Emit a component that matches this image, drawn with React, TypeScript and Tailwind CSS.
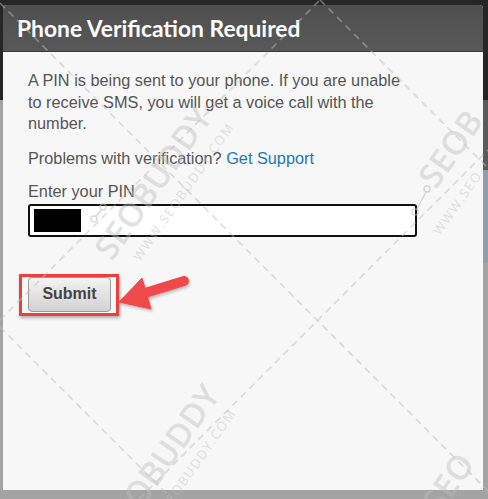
import React from "react";

const Watermark = () => (
  <svg
    className="pointer-events-none absolute inset-0"
    width="488"
    height="499"
    viewBox="0 0 488 499"
  >
    <g stroke="rgba(190,190,190,0.5)" strokeWidth="1.6" strokeDasharray="7 5" fill="none">
      <line x1="0" y1="3" x2="488" y2="491" />
      <line x1="0" y1="327" x2="172" y2="499" />
      <line x1="320" y1="0" x2="488" y2="168" />
      <line x1="0" y1="320" x2="320" y2="0" />
      <line x1="139" y1="499" x2="488" y2="150" />
    </g>
    <g fill="rgba(190,190,190,0.45)" fontFamily="'Open Sans', sans-serif">
      <text x="112" y="262" fontSize="33" fontWeight="600" transform="rotate(-55 112 262)">SEOBUDDY</text>
      <text x="140" y="262" fontSize="13" letterSpacing="1.5" transform="rotate(-55 140 262)">WWW.SEOBUDDY.COM</text>
      <text x="120" y="540" fontSize="33" fontWeight="600" transform="rotate(-55 120 540)">SEOBUDDY</text>
      <text x="142" y="548" fontSize="13" letterSpacing="1.5" transform="rotate(-55 142 548)">WWW.SEOBUDDY.COM</text>
      <text x="436" y="190" fontSize="33" fontWeight="600" transform="rotate(-55 436 190)">SEOB</text>
      <text x="440" y="236" fontSize="13" letterSpacing="1.5" transform="rotate(-55 440 236)">WWW.SEO</text>
      <text x="440" y="515" fontSize="33" fontWeight="600" transform="rotate(-55 440 515)">SEO</text>
    </g>
    <g stroke="rgba(190,190,190,0.55)" strokeWidth="1.5" fill="none">
      <circle cx="103" cy="207" r="3" />
      <circle cx="94" cy="219" r="3" />
      <line x1="101" y1="210" x2="96" y2="216" />
      <circle cx="427" cy="189" r="3" />
      <circle cx="415" cy="212" r="3" />
      <line x1="426" y1="192" x2="417" y2="209" />
    </g>
  </svg>
);

const Arrow = () => (
  <svg
    className="pointer-events-none absolute left-[110px] top-[265px]"
    width="90"
    height="55"
    viewBox="110 265 90 55"
  >
    <defs>
      <filter id="sh" x="-20%" y="-20%" width="140%" height="140%">
        <feDropShadow dx="1" dy="2" stdDeviation="1.5" floodColor="#000" floodOpacity="0.25" />
      </filter>
    </defs>
    <g filter="url(#sh)" fill="#f04848" stroke="#f04848">
      <line x1="145" y1="293" x2="184" y2="281" strokeWidth="10" strokeLinecap="round" />
      <polygon points="119,302 142,278 151,309" strokeWidth="1" strokeLinejoin="round" />
    </g>
  </svg>
);

export default function App() {
  return (
    <div className="relative h-[499px] w-[488px] overflow-hidden bg-[#a3a3a3]">
      {/* dimmed page behind */}
      <div className="flex h-full flex-col">
        <div className="h-[100px] bg-[#262626]" />
        <div className="flex h-[70px] justify-end bg-[#a3a3a3]">
          <div className="w-[5px] bg-[#5a5a5a]" />
        </div>
        <div className="flex h-[93px] justify-end">
          <div className="w-[5px] bg-[#8ea0ae]" />
        </div>
      </div>

      {/* dialog */}
      <div className="absolute left-[3px] top-[5px] flex h-[485px] w-[480px] flex-col overflow-hidden rounded-t-[4px] bg-[#f7f7f7]">
        <div className="flex h-[47px] items-center border-b border-[#3a3a3a] bg-[linear-gradient(#4f4f4f,#585858)] pl-[14px]">
          <h1 className="font-['Lato',sans-serif] text-[22.8px] font-bold text-white">
            Phone Verification Required
          </h1>
        </div>
        <div className="flex flex-col pl-[25px] pt-[18px] font-['Liberation_Sans',Arial,sans-serif] text-[16.3px] leading-[21.5px] text-[#555]">
          <p className="w-[385px]">
            A PIN is being sent to your phone. If you are unable to receive SMS, you will get a voice call with the number.
          </p>
          <p className="mt-[13.5px]">
            Problems with verification? <span className="text-[#1a7ab5]">Get Support</span>
          </p>
          <label className="mt-[11.5px]">Enter your PIN</label>
          <div className="mt-[1px] flex h-[33px] w-[389px] items-center rounded-[3px] border-2 border-[#111] bg-white pl-[4px]">
            <div className="h-[23px] w-[47px] bg-black" />
          </div>
          <div className="mt-[40px] flex">
            <button className="h-[35px] w-[83px] rounded-[4px] border border-[#9a9a9a] bg-[linear-gradient(#f3f3f3,#d2d2d2)] text-[16px] font-bold text-[#444]">
              Submit
            </button>
          </div>
        </div>
      </div>

      {/* annotation box */}
      <div className="pointer-events-none absolute left-[19px] top-[274px] h-[42px] w-[100px] border-[3px] border-[#ec4040] shadow-[1px_2px_3px_rgba(0,0,0,0.3)]" />
      <Arrow />
      <Watermark />
    </div>
  );
}
